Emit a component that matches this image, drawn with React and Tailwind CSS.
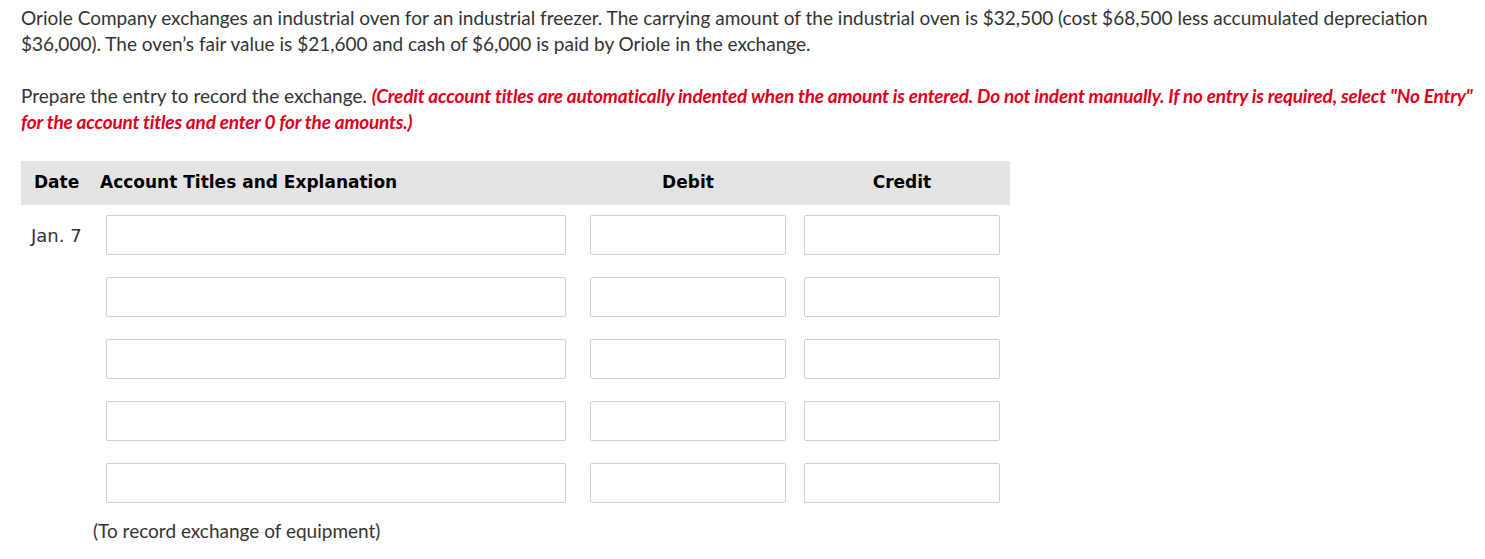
import React from 'react';

const rows = [0, 1, 2, 3, 4];

function Field({ className }) {
    return <div className={`h-[40px] border border-[#cfcfcf] rounded-[2px] bg-white ${className}`} />;
}

export default function App() {
    return (
        <div className="bg-white w-[1485px] h-[559px] overflow-hidden text-[#333333]">
            <div className="pl-[21px] pr-[10px] pt-[5px] font-['Lato','Noto_Sans',sans-serif] text-[19px] leading-[26px]">
                <p>
                    Oriole Company exchanges an industrial oven for an industrial freezer. The carrying amount of the industrial oven is $32,500 (cost $68,500 less accumulated depreciation $36,000). The oven’s fair value is $21,600 and cash of $6,000 is paid by Oriole in the exchange.
                </p>
                <p className="mt-[26px]">
                    Prepare the entry to record the exchange.{' '}
                    <span className="text-[#e0001b] font-bold italic tracking-[-0.2px]">
                        (Credit account titles are automatically indented when the amount is entered. Do not indent manually. If no entry is required, select "No Entry" for the account titles and enter 0 for the amounts.)
                    </span>
                </p>
            </div>

            <div className="ml-[21px] mt-[26px] w-[989px]">
                <div className="h-[44px] bg-[#e4e4e4] flex items-center font-['DejaVu_Sans',sans-serif] font-bold text-[17px] text-black">
                    <div className="w-[79px] pl-[13px]">Date</div>
                    <div className="w-[490px]">Account Titles and Explanation</div>
                    <div className="w-[196px] text-center">Debit</div>
                    <div className="w-[18px]" />
                    <div className="w-[196px] text-center">Credit</div>
                </div>

                <div className="pt-[10px]">
                    {rows.map((r) => (
                        <div key={r} className="flex items-center h-[40px] mb-[22px]">
                            <div className="w-[85px] pl-[10px] font-['DejaVu_Sans',sans-serif] text-[18px] text-[#333]">
                                {r === 0 ? 'Jan. 7' : ''}
                            </div>
                            <Field className="w-[460px]" />
                            <Field className="w-[196px] ml-[24px]" />
                            <Field className="w-[196px] ml-[18px]" />
                        </div>
                    ))}
                </div>

                <div className="-mt-[7px] pl-[72px] font-['Lato','Noto_Sans',sans-serif] text-[19px] leading-[26px]">
                    (To record exchange of equipment)
                </div>
            </div>
        </div>
    );
}
